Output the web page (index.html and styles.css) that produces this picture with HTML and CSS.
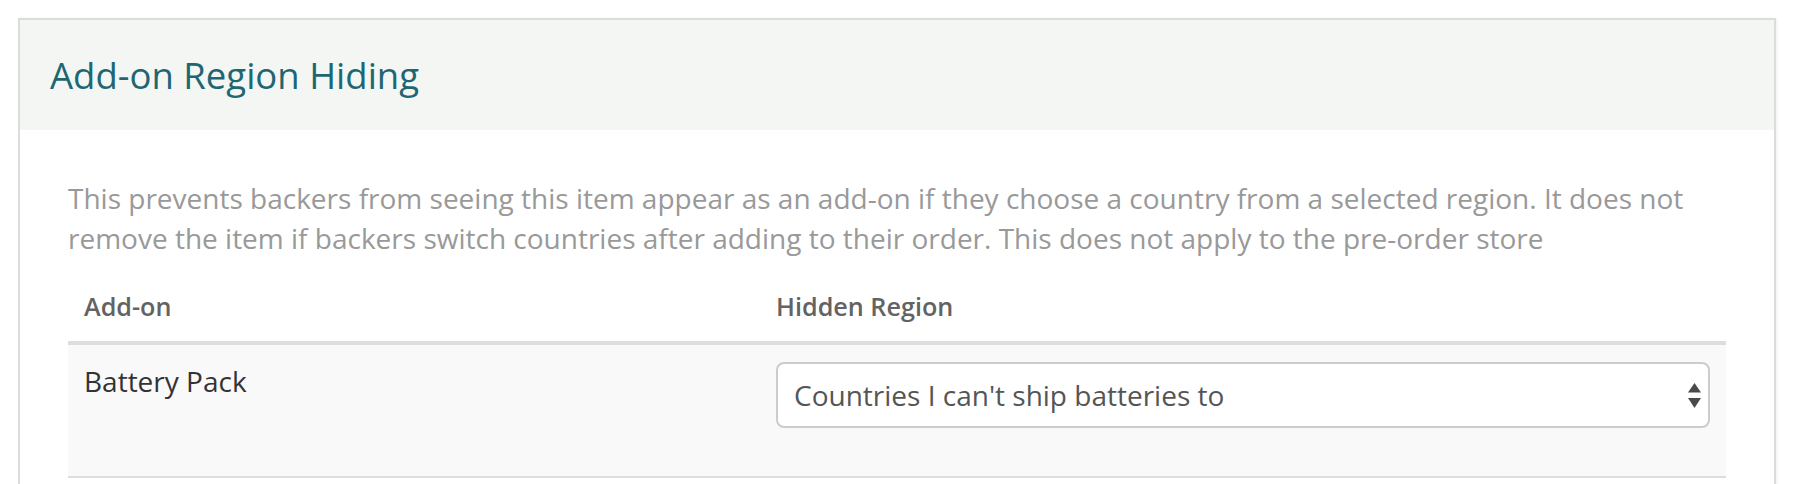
FILE: index.html
```html
<!DOCTYPE html>
<html lang="en">
<head>
<meta charset="utf-8">
<title>Add-on Region Hiding</title>
<link rel="stylesheet" href="styles.css">
</head>
<body>
<div class="panel">
  <div class="panel-heading">
    <h2 class="panel-title">Add-on Region Hiding</h2>
  </div>
  <div class="panel-body">
    <p class="help">This prevents backers from seeing this item appear as an add-on if they choose a country from a selected region. It does not remove the item if backers switch countries after adding to their order. This does not apply to the pre-order store</p>
    <table class="table">
      <colgroup>
        <col class="col-addon">
        <col class="col-region">
      </colgroup>
      <thead>
        <tr><th>Add-on</th><th>Hidden Region</th></tr>
      </thead>
      <tbody>
        <tr>
          <td class="name">Battery Pack</td>
          <td>
            <div class="select">
              <span class="select-value">Countries I can't ship batteries to</span>
              <svg class="select-arrows" width="13" height="25" viewBox="0 0 13 25" aria-hidden="true">
                <polygon points="6.5,0 13,9.5 0,9.5"/>
                <polygon points="0,15 13,15 6.5,25"/>
              </svg>
            </div>
          </td>
        </tr>
      </tbody>
    </table>
  </div>
</div>
</body>
</html>
```

FILE: styles.css
```css
html, body {
  margin: 0;
  padding: 0;
  background: #ffffff;
}

body {
  font-family: "Open Sans", "Noto Sans", "Liberation Sans", sans-serif;
  padding: 18px 20px 0 18px;
}

.panel {
  border: 2px solid #dcdcdc;
  border-bottom: none;
  box-shadow: 1px 0 2px rgba(0, 0, 0, 0.06);
  background: #ffffff;
}

.panel-heading {
  background: #f4f6f3;
  height: 110px;
  padding: 0 30px;
  display: flex;
  align-items: center;
}

.panel-title {
  margin: 0;
  font-size: 36.5px;
  font-weight: 400;
  line-height: 1.1;
  color: #1f6673;
}

.panel-body {
  padding: 48px 48px 48px 48px;
}

.help {
  margin: 0 0 14px;
  font-size: 28px;
  line-height: 40px;
  color: #999999;
}

.table {
  width: 100%;
  border-collapse: collapse;
  table-layout: fixed;
}

.col-addon {
  width: 692px;
}

.table th {
  text-align: left;
  padding: 16px;
  font-size: 25.2px;
  line-height: 37px;
  font-weight: 600;
  color: #636363;
  border-bottom: 4px solid #dddddd;
}

.table td {
  padding: 16px;
  background: #f9f9f9;
  border-bottom: 2px solid #dddddd;
  vertical-align: top;
  font-size: 28px;
  line-height: 40px;
  color: #333333;
}

.select {
  box-sizing: border-box;
  height: 66px;
  margin: 1px 0 32px;
  border: 2px solid #cccccc;
  border-radius: 8px;
  background: #ffffff;
  padding: 0 7px 0 16px;
  display: flex;
  align-items: center;
  justify-content: space-between;
  font-size: 28px;
  color: #555555;
}

.select-arrows {
  fill: #4a4a4a;
  flex: none;
}
```
